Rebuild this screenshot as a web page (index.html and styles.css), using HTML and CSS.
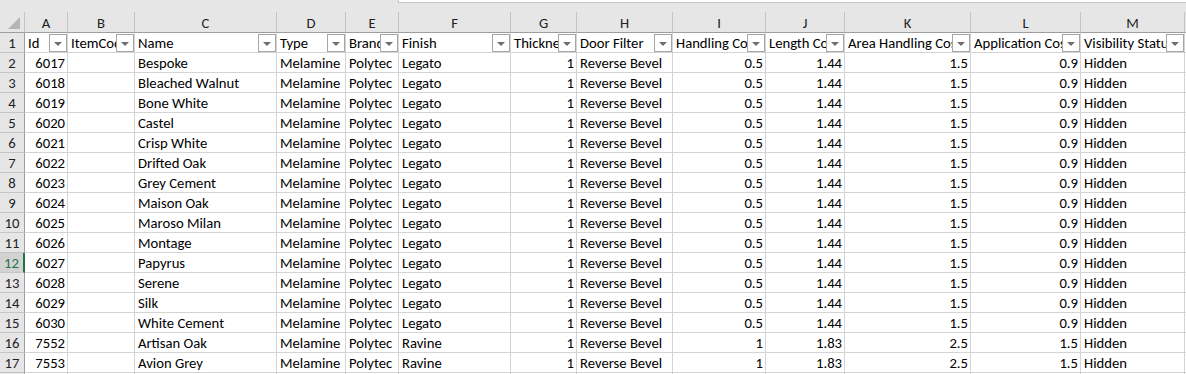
FILE: index.html
```html
<!DOCTYPE html>
<html lang="en">
<head>
    <meta charset="UTF-8">
    <title>Products</title>
    <link rel="stylesheet" href="styles.css">
</head>
<body>
    <div class="topstrip"><div class="formula-edge"></div></div>

    <div class="row col-heads">
        <div class="corner"><svg width="13" height="12" viewBox="0 0 13 12"><polygon points="12,0 12,12 0,12" fill="#b4b4b4"/></svg></div>
        <div>A</div><div>B</div><div>C</div><div>D</div><div>E</div><div>F</div><div>G</div>
        <div>H</div><div>I</div><div>J</div><div>K</div><div>L</div><div>M</div><div class="fill"></div>
    </div>

    <div class="row">
        <div class="rh">1</div>
        <div class="c f">Id<span class="btn"></span></div>
        <div class="c f">ItemCode<span class="btn"></span></div>
        <div class="c f">Name<span class="btn"></span></div>
        <div class="c f">Type<span class="btn"></span></div>
        <div class="c f">Brand<span class="btn"></span></div>
        <div class="c f">Finish<span class="btn"></span></div>
        <div class="c f">Thickness<span class="btn"></span></div>
        <div class="c f">Door Filter<span class="btn"></span></div>
        <div class="c f">Handling Cost<span class="btn"></span></div>
        <div class="c f">Length Cost<span class="btn"></span></div>
        <div class="c f">Area Handling Cost<span class="btn"></span></div>
        <div class="c f">Application Cost<span class="btn"></span></div>
        <div class="c f">Visibility Status<span class="btn"></span></div>
        <div class="c"></div>
    </div>

    <div class="row"><div class="rh">2</div><div class="c n">6017</div><div class="c"></div><div class="c">Bespoke</div><div class="c">Melamine</div><div class="c">Polytec</div><div class="c">Legato</div><div class="c n">1</div><div class="c">Reverse Bevel</div><div class="c n">0.5</div><div class="c n">1.44</div><div class="c n">1.5</div><div class="c n">0.9</div><div class="c">Hidden</div><div class="c"></div></div>
    <div class="row"><div class="rh">3</div><div class="c n">6018</div><div class="c"></div><div class="c">Bleached Walnut</div><div class="c">Melamine</div><div class="c">Polytec</div><div class="c">Legato</div><div class="c n">1</div><div class="c">Reverse Bevel</div><div class="c n">0.5</div><div class="c n">1.44</div><div class="c n">1.5</div><div class="c n">0.9</div><div class="c">Hidden</div><div class="c"></div></div>
    <div class="row"><div class="rh">4</div><div class="c n">6019</div><div class="c"></div><div class="c">Bone White</div><div class="c">Melamine</div><div class="c">Polytec</div><div class="c">Legato</div><div class="c n">1</div><div class="c">Reverse Bevel</div><div class="c n">0.5</div><div class="c n">1.44</div><div class="c n">1.5</div><div class="c n">0.9</div><div class="c">Hidden</div><div class="c"></div></div>
    <div class="row"><div class="rh">5</div><div class="c n">6020</div><div class="c"></div><div class="c">Castel</div><div class="c">Melamine</div><div class="c">Polytec</div><div class="c">Legato</div><div class="c n">1</div><div class="c">Reverse Bevel</div><div class="c n">0.5</div><div class="c n">1.44</div><div class="c n">1.5</div><div class="c n">0.9</div><div class="c">Hidden</div><div class="c"></div></div>
    <div class="row"><div class="rh">6</div><div class="c n">6021</div><div class="c"></div><div class="c">Crisp White</div><div class="c">Melamine</div><div class="c">Polytec</div><div class="c">Legato</div><div class="c n">1</div><div class="c">Reverse Bevel</div><div class="c n">0.5</div><div class="c n">1.44</div><div class="c n">1.5</div><div class="c n">0.9</div><div class="c">Hidden</div><div class="c"></div></div>
    <div class="row"><div class="rh">7</div><div class="c n">6022</div><div class="c"></div><div class="c">Drifted Oak</div><div class="c">Melamine</div><div class="c">Polytec</div><div class="c">Legato</div><div class="c n">1</div><div class="c">Reverse Bevel</div><div class="c n">0.5</div><div class="c n">1.44</div><div class="c n">1.5</div><div class="c n">0.9</div><div class="c">Hidden</div><div class="c"></div></div>
    <div class="row"><div class="rh">8</div><div class="c n">6023</div><div class="c"></div><div class="c">Grey Cement</div><div class="c">Melamine</div><div class="c">Polytec</div><div class="c">Legato</div><div class="c n">1</div><div class="c">Reverse Bevel</div><div class="c n">0.5</div><div class="c n">1.44</div><div class="c n">1.5</div><div class="c n">0.9</div><div class="c">Hidden</div><div class="c"></div></div>
    <div class="row"><div class="rh">9</div><div class="c n">6024</div><div class="c"></div><div class="c">Maison Oak</div><div class="c">Melamine</div><div class="c">Polytec</div><div class="c">Legato</div><div class="c n">1</div><div class="c">Reverse Bevel</div><div class="c n">0.5</div><div class="c n">1.44</div><div class="c n">1.5</div><div class="c n">0.9</div><div class="c">Hidden</div><div class="c"></div></div>
    <div class="row"><div class="rh">10</div><div class="c n">6025</div><div class="c"></div><div class="c">Maroso Milan</div><div class="c">Melamine</div><div class="c">Polytec</div><div class="c">Legato</div><div class="c n">1</div><div class="c">Reverse Bevel</div><div class="c n">0.5</div><div class="c n">1.44</div><div class="c n">1.5</div><div class="c n">0.9</div><div class="c">Hidden</div><div class="c"></div></div>
    <div class="row"><div class="rh">11</div><div class="c n">6026</div><div class="c"></div><div class="c">Montage</div><div class="c">Melamine</div><div class="c">Polytec</div><div class="c">Legato</div><div class="c n">1</div><div class="c">Reverse Bevel</div><div class="c n">0.5</div><div class="c n">1.44</div><div class="c n">1.5</div><div class="c n">0.9</div><div class="c">Hidden</div><div class="c"></div></div>
    <div class="row"><div class="rh active">12</div><div class="c n">6027</div><div class="c"></div><div class="c">Papyrus</div><div class="c">Melamine</div><div class="c">Polytec</div><div class="c">Legato</div><div class="c n">1</div><div class="c">Reverse Bevel</div><div class="c n">0.5</div><div class="c n">1.44</div><div class="c n">1.5</div><div class="c n">0.9</div><div class="c">Hidden</div><div class="c"></div></div>
    <div class="row"><div class="rh">13</div><div class="c n">6028</div><div class="c"></div><div class="c">Serene</div><div class="c">Melamine</div><div class="c">Polytec</div><div class="c">Legato</div><div class="c n">1</div><div class="c">Reverse Bevel</div><div class="c n">0.5</div><div class="c n">1.44</div><div class="c n">1.5</div><div class="c n">0.9</div><div class="c">Hidden</div><div class="c"></div></div>
    <div class="row"><div class="rh">14</div><div class="c n">6029</div><div class="c"></div><div class="c">Silk</div><div class="c">Melamine</div><div class="c">Polytec</div><div class="c">Legato</div><div class="c n">1</div><div class="c">Reverse Bevel</div><div class="c n">0.5</div><div class="c n">1.44</div><div class="c n">1.5</div><div class="c n">0.9</div><div class="c">Hidden</div><div class="c"></div></div>
    <div class="row"><div class="rh">15</div><div class="c n">6030</div><div class="c"></div><div class="c">White Cement</div><div class="c">Melamine</div><div class="c">Polytec</div><div class="c">Legato</div><div class="c n">1</div><div class="c">Reverse Bevel</div><div class="c n">0.5</div><div class="c n">1.44</div><div class="c n">1.5</div><div class="c n">0.9</div><div class="c">Hidden</div><div class="c"></div></div>
    <div class="row"><div class="rh">16</div><div class="c n">7552</div><div class="c"></div><div class="c">Artisan Oak</div><div class="c">Melamine</div><div class="c">Polytec</div><div class="c">Ravine</div><div class="c n">1</div><div class="c">Reverse Bevel</div><div class="c n">1</div><div class="c n">1.83</div><div class="c n">2.5</div><div class="c n">1.5</div><div class="c">Hidden</div><div class="c"></div></div>
    <div class="row"><div class="rh">17</div><div class="c n">7553</div><div class="c"></div><div class="c">Avion Grey</div><div class="c">Melamine</div><div class="c">Polytec</div><div class="c">Ravine</div><div class="c n">1</div><div class="c">Reverse Bevel</div><div class="c n">1</div><div class="c n">1.83</div><div class="c n">2.5</div><div class="c n">1.5</div><div class="c">Hidden</div><div class="c"></div></div>
    <div class="row"><div class="rh"></div><div class="c"></div><div class="c"></div><div class="c"></div><div class="c"></div><div class="c"></div><div class="c"></div><div class="c"></div><div class="c"></div><div class="c"></div><div class="c"></div><div class="c"></div><div class="c"></div><div class="c"></div><div class="c"></div></div>
</body>
</html>
```

FILE: styles.css
```css
body {
    margin: 0;
    background: #fff;
    font-family: Carlito, Calibri, Lato, "Liberation Sans", sans-serif;
    font-size: 14.67px;
    color: #000;
    overflow: hidden;
}
.topstrip {
    height: 12px;
    background: #e6e6e6;
}
.formula-edge {
    margin-left: 398px;
    height: 2px;
    background: #fff;
    border-left: 1px solid #c6c6c6;
    border-bottom: 1px solid #c6c6c6;
}
.row {
    display: grid;
    grid-template-columns: 25px 43px 67px 142px 69px 53px 112px 66px 96px 93px 79px 126px 110px 104px 1fr;
    height: 20px;
}
.row > div {
    box-sizing: border-box;
    height: 20px;
    padding-top: 1px;
    line-height: 19px;
    white-space: nowrap;
    overflow: hidden;
}
.col-heads {
    background: #e6e6e6;
    height: 21px;
}
.col-heads > div {
    height: 21px;
    text-align: center;
    color: #222;
    border-right: 1px solid #c4c4c4;
    border-bottom: 1px solid #9e9e9e;
    line-height: 20px;
}
.col-heads .fill {
    border-right: none;
}
.corner {
    display: flex;
    align-items: flex-end;
    justify-content: flex-end;
    padding: 0 3px 3px 0;
}
.corner svg {
    display: block;
}
.rh {
    background: #e6e6e6;
    text-align: center;
    color: #222;
    border-right: 1px solid #9e9e9e;
    border-bottom: 1px solid #c4c4c4;
}
.rh.active {
    background: #d2d2d2;
    color: #217346;
    border-right: 2px solid #217346;
}
.c {
    border-right: 1px solid #d4d4d4;
    border-bottom: 1px solid #d4d4d4;
    padding-left: 3px;
    padding-right: 3px;
}
.c.n {
    text-align: right;
    padding-left: 0;
    padding-right: 2px;
}
.c.f {
    position: relative;
}
.btn {
    position: absolute;
    right: 0;
    bottom: 0;
    width: 18px;
    height: 18px;
    box-sizing: border-box;
    background: #fff;
    border: 1px solid #a6a6a6;
}
.btn::after {
    content: "";
    position: absolute;
    left: 4px;
    top: 7px;
    border-left: 4px solid transparent;
    border-right: 4px solid transparent;
    border-top: 4px solid #6f6f6f;
}
```
